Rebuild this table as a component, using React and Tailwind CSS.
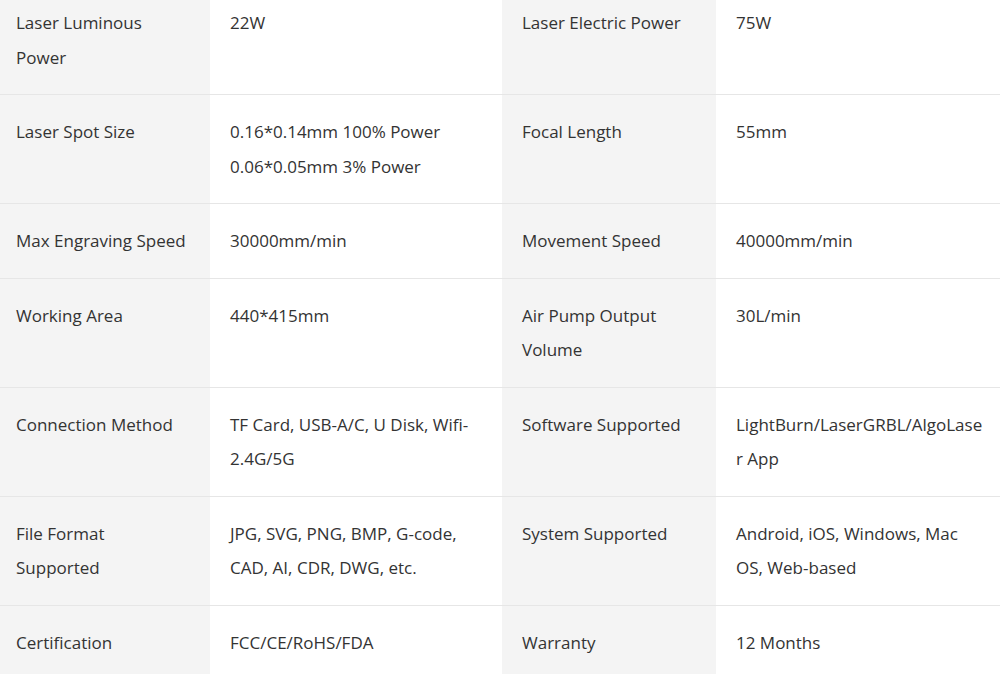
const specs = [
  ['Laser Luminous Power', '22W', 'Laser Electric Power', '75W'],
  ['Laser Spot Size', '0.16*0.14mm 100% Power\n0.06*0.05mm 3% Power', 'Focal Length', '55mm'],
  ['Max Engraving Speed', '30000mm/min', 'Movement Speed', '40000mm/min'],
  ['Working Area', '440*415mm', 'Air Pump Output Volume', '30L/min'],
  ['Connection Method', 'TF Card, USB-A/C, U Disk, Wifi-2.4G/5G', 'Software Supported', 'LightBurn/LaserGRBL/AlgoLaser App'],
  ['File Format Supported', 'JPG, SVG, PNG, BMP, G-code, CAD, AI, CDR, DWG, etc.', 'System Supported', 'Android, iOS, Windows, Mac OS, Web-based'],
  ['Certification', 'FCC/CE/RoHS/FDA', 'Warranty', '12 Months'],
];

const App = () => {
  return (
    <div className="w-[1000px] h-[674px] overflow-hidden bg-white">
      <div
        className="grid grid-cols-[214px_292px_214px_292px] -mt-[14px] -ml-[4px] text-[17px] leading-[34.5px] text-[#333]"
        style={{ fontFamily: '"Open Sans", "Liberation Sans", sans-serif' }}
      >
        {specs.map((row, i) =>
          row.map((cell, j) => (
            <div
              key={`${i}-${j}`}
              className={`px-5 pt-5 pb-[19px] border-b border-[#e6e6e6] whitespace-pre-line break-words ${
                j % 2 === 0 ? 'bg-[#f4f4f4]' : 'bg-white'
              }`}
            >
              {cell}
            </div>
          ))
        )}
      </div>
    </div>
  );
};

export default App;
